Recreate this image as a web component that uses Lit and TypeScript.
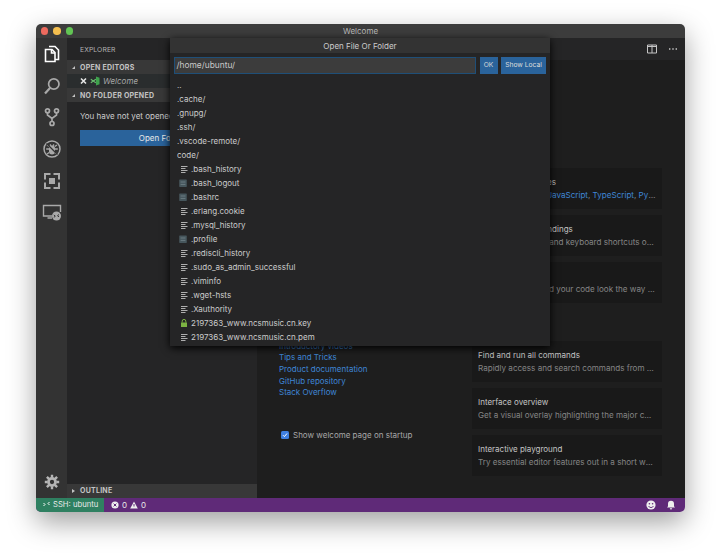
import { LitElement, html, css, svg } from "lit";
import { customElement } from "lit/decorators.js";

const FILES = [
  { name: ".bash_history", icon: "lines" },
  { name: ".bash_logout", icon: "block" },
  { name: ".bashrc", icon: "block" },
  { name: ".erlang.cookie", icon: "lines" },
  { name: ".mysql_history", icon: "lines" },
  { name: ".profile", icon: "block" },
  { name: ".rediscli_history", icon: "lines" },
  { name: ".sudo_as_admin_successful", icon: "lines" },
  { name: ".viminfo", icon: "lines" },
  { name: ".wget-hsts", icon: "lines" },
  { name: ".Xauthority", icon: "lines" },
  { name: "2197363_www.ncsmusic.cn.key", icon: "lock" },
  { name: "2197363_www.ncsmusic.cn.pem", icon: "lines" },
];
const DIRS = ["..", ".cache/", ".gnupg/", ".ssh/", ".vscode-remote/", "code/"];

// icons for the file rows
function fileIcon(kind: string) {
  if (kind === "lock") {
    return svg`<svg class="ficon" viewBox="0 0 10 10"><path d="M4.200 4.500V3.200a1.800 1.800 0 0 1 3.600 0v1.300" fill="none" stroke="#7cb342" stroke-width="1"/><rect x="3" y="4.500" width="6" height="4.500" fill="#7cb342"/></svg>`;
  }
  if (kind === "block") {
    return svg`<svg class="ficon" viewBox="0 0 10 10"><rect x="1.200" y="1.500" width="7.600" height="7.400" rx=".6" fill="#46565c"/><path d="M2.600 4h4.800M2.600 6.400h4.800" stroke="#6b7b81" stroke-width="1"/></svg>`;
  }
  return svg`<svg class="ficon" viewBox="0 0 10 10"><path d="M3 2.500h6.500M3 4.500h4.500M3 6.500h6.500M3 8.500h4.500" stroke="#aeaeae" stroke-width="1" fill="none"/></svg>`;
}

@customElement("activity-bar")
export class ActivityBar extends LitElement {
  static styles = css`
    :host {
      display: flex;
      flex-direction: column;
      align-items: center;
      width: 31px;
      flex: none;
      background: #333333;
      padding-top: 6px;
      box-sizing: border-box;
    }
    svg {
      width: 20px;
      height: 20px;
      margin-bottom: 11.700px;
      flex: none;
      fill: none;
      stroke: #a9a9a9;
    }
    svg.active {
      stroke: #ffffff;
    }
    svg.gear {
      margin-top: auto;
      margin-bottom: 8px;
      width: 16px;
      height: 16px;
    }
  `;

  render() {
    return html`
      <svg class="active" viewBox="0 0 20 20" stroke-width="1.600">
        <path d="M7 2.500h6l3.500 3.500v9.500H13" />
        <path d="M3.500 5.500h6.500l3 3v9h-9.500z" />
        <path d="M9.500 5.500v3.500h3.500" />
      </svg>
      <svg viewBox="0 0 20 20" stroke-width="1.700">
        <circle cx="11.800" cy="8" r="5.200" />
        <path d="M8 12L3 17.500" stroke-width="2.200" />
      </svg>
      <svg viewBox="0 0 20 20" stroke-width="1.700">
        <circle cx="5.500" cy="3.800" r="2" />
        <circle cx="14.500" cy="3.800" r="2" />
        <circle cx="10" cy="16.500" r="2" />
        <path d="M5.500 5.800v2.200l4.500 3.500 4.500-3.500v-2.200M10 11.500v3" />
      </svg>
      <svg viewBox="0 0 20 20" stroke-width="1.500">
        <circle cx="10" cy="10" r="8" />
        <path d="M7 9.500a3 3 0 0 1 6 0v3a3 3 0 0 1-6 0z" fill="#a9a9a9" stroke="none" />
        <path d="M8 5.500l1.200 1.500M12 5.500l-1.200 1.500M4.200 10H7M13 10h2.800M5 15l2.200-1.500M15 15l-2.200-1.500M5 6l2.200 1.500M15 6l-2.200 1.500" stroke-width="1.300" />
        <path d="M4.500 4.500l11 11" stroke-width="1.300" stroke="#333333" />
      </svg>
      <svg viewBox="0 0 20 20" stroke-width="2">
        <path d="M8.500 3H3v5.500M11.500 3H17v5.500M8.500 17H3v-5.500M11.500 17H17v-5.500" />
        <rect x="6.500" y="6.500" width="7" height="7" fill="#a9a9a9" stroke="#333333" stroke-width="1" />
      </svg>
      <svg viewBox="0 0 20 20" stroke-width="1.400" style="overflow:visible">
        <path d="M10 14H1.500V3.500h17V10M5.500 16H10" />
        <circle cx="14.500" cy="14" r="4.500" fill="#a9a9a9" stroke="none" />
        <path d="M11.800 13l1.500 1.200-1.500 1.200M17 12.500l-1.500 1.200 1.500 1.200" stroke="#333" stroke-width="1" />
      </svg>
      <svg class="gear" viewBox="0 0 20 20" stroke-width="3.400" style="stroke:#b5b5b5">
        <circle cx="10" cy="10" r="4.400" />
        <path d="M10 1v3.500M10 15.500V19M1 10h3.500M15.500 10H19M3.600 3.600l2.500 2.500M13.900 13.900l2.500 2.500M3.600 16.400l2.500-2.500M13.900 6.100l2.500-2.500" stroke-width="3" />
      </svg>
    `;
  }
}

@customElement("side-bar")
export class SideBar extends LitElement {
  static styles = css`
    :host {
      display: flex;
      flex-direction: column;
      width: 190px;
      flex: none;
      background: #252526;
      color: #cccccc;
    }
    .title {
      height: 22px;
      line-height: 23px;
      padding-left: 13px;
      font-size: 6.800px;
      letter-spacing: 0.100px;
      color: #b4b4b4;
      box-sizing: border-box;
    }
    .section {
      display: flex;
      align-items: center;
      gap: 5px;
      height: 14px;
      padding-left: 5px;
      background: #383838;
      font-size: 7px;
      font-weight: 700;
      letter-spacing: 0.250px;
      color: #c4c4c4;
    }
    .tri {
      width: 0;
      height: 0;
      border-left: 3px solid transparent;
      border-bottom: 3px solid #c4c4c4;
    }
    .tri.right {
      border-left: 3px solid #c4c4c4;
      border-top: 2.500px solid transparent;
      border-bottom: 2.500px solid transparent;
    }
    .row {
      display: flex;
      align-items: center;
      height: 14px;
      padding-left: 11.500px;
      background: #2a2d2e;
      font-size: 8px;
      font-style: italic;
      color: #a8a8a8;
    }
    .row svg {
      width: 9px;
      height: 10px;
      flex: none;
    }
    .row svg.logo {
      width: 10px;
      margin: 0 3.500px 0 2px;
    }
    .empty {
      padding: 8px 13px 0;
      flex: 1;
      font-size: 8px;
      white-space: nowrap;
      overflow: hidden;
    }
    .empty p {
      margin: 0 0 8px;
      line-height: 12px;
    }
    .open {
      height: 16px;
      line-height: 16px;
      text-align: center;
      background: #2a639b;
      color: #e8e8e8;
    }
  `;

  render() {
    return html`
      <div class="title">EXPLORER</div>
      <div class="section"><span class="tri"></span>OPEN EDITORS</div>
      <div class="row">
        <svg viewBox="0 0 9 10"><path d="M2 2.500l5 5M7 2.500l-5 5" stroke="#e6e6e6" stroke-width="1.600" /></svg>
        <svg class="logo" viewBox="0 0 10 10">
          <path d="M6 .5L9.500 1.800v6.400L6 9.500z" fill="#3fa34d" />
          <path d="M.8 3.300l5 3.400M.8 6.700l5-3.400" stroke="#6cc070" stroke-width="1.100" />
        </svg>
        <span>Welcome</span>
      </div>
      <div class="section"><span class="tri"></span>NO FOLDER OPENED</div>
      <div class="empty">
        <p>You have not yet opened a folder.</p>
        <div class="open">Open Folder</div>
      </div>
      <div class="section"><span class="tri right"></span>OUTLINE</div>
    `;
  }
}

@customElement("welcome-page")
export class WelcomePage extends LitElement {
  static styles = css`
    :host {
      display: flex;
      flex-direction: column;
      flex: 1;
      min-width: 0;
      background: #1e1e1e;
      color: #cccccc;
    }
    .tabs {
      display: flex;
      align-items: center;
      justify-content: flex-end;
      gap: 11px;
      height: 22px;
      padding-right: 7px;
      background: #252526;
      flex: none;
    }
    .tabs svg {
      width: 10px;
      height: 10px;
    }
    .page {
      display: grid;
      grid-template-columns: 193px 190px;
      padding: 0 22px;
      flex: 1;
    }
    .left {
      padding-top: 280.500px;
      font-size: 8px;
    }
    .link {
      display: block;
      height: 11.700px;
      line-height: 11.700px;
      color: #3f86d6;
    }
    .startup {
      display: flex;
      align-items: center;
      gap: 4px;
      margin: 31.500px 0 0 2px;
      color: #a8a8a8;
    }
    .check {
      width: 8px;
      height: 8px;
      border-radius: 1.500px;
      background: #3f7fe0;
      flex: none;
    }
    .check svg {
      display: block;
      width: 8px;
      height: 8px;
    }
    .right {
      padding-top: 108px;
    }
    .card {
      height: 41px;
      margin-bottom: 6px;
      padding: 7.500px 6px 0;
      background: #191919;
      box-sizing: border-box;
      font-size: 8px;
      line-height: 13px;
    }
    .card .name {
      color: #c4c4c4;
    }
    .card .desc {
      font-size: 8.080px;
      color: #858585;
      white-space: nowrap;
      overflow: hidden;
      text-overflow: ellipsis;
    }
    .card .desc a {
      color: #3f86d6;
    }
    .gap {
      height: 32px;
    }
  `;

  render() {
    return html`
      <div class="tabs">
        <svg viewBox="0 0 10 10"><path d="M.500 1h9v8h-9zM5 1v8M.500 2.500h9" fill="none" stroke="#c5c5c5" stroke-width="1" /></svg>
        <svg viewBox="0 0 10 10"><path d="M1 5h1.400M4.300 5h1.400M7.600 5H9" stroke="#c5c5c5" stroke-width="1.300" /></svg>
      </div>
      <div class="page">
        <div class="left">
          <a class="link">Introductory videos</a>
          <a class="link">Tips and Tricks</a>
          <a class="link">Product documentation</a>
          <a class="link">GitHub repository</a>
          <a class="link">Stack Overflow</a>
          <label class="startup">
            <span class="check"><svg viewBox="0 0 8 8"><path d="M2 4.200l1.400 1.400L6 2.500" fill="none" stroke="#fff" stroke-width="1" /></svg></span>
            Show welcome page on startup
          </label>
        </div>
        <div class="right">
          <div class="card">
            <div class="name">Tools and languages</div>
            <div class="desc">Install support for <a>JavaScript</a>, <a>TypeScript</a>, <a>Python</a>, <a>PHP</a>, <a>Azure</a></div>
          </div>
          <div class="card">
            <div class="name">Settings and keybindings</div>
            <div class="desc">Install the settings and keyboard shortcuts of Vim, Sublime, Atom</div>
          </div>
          <div class="card">
            <div class="name">Color theme</div>
            <div class="desc">Make the editor and your code look the way you love</div>
          </div>
          <div class="gap"></div>
          <div class="card">
            <div class="name">Find and run all commands</div>
            <div class="desc">Rapidly access and search commands from the Command Palette</div>
          </div>
          <div class="card">
            <div class="name">Interface overview</div>
            <div class="desc">Get a visual overlay highlighting the major components of the UI</div>
          </div>
          <div class="card">
            <div class="name">Interactive playground</div>
            <div class="desc">Try essential editor features out in a short walkthrough</div>
          </div>
        </div>
      </div>
    `;
  }
}

@customElement("quick-open")
export class QuickOpen extends LitElement {
  static styles = css`
    :host {
      position: absolute;
      left: 134px;
      top: 14px;
      width: 380px;
      height: 308px;
      display: flex;
      flex-direction: column;
      background: #252526;
      color: #cccccc;
      font-size: 8px;
      box-shadow: 0 2px 8px #000000;
    }
    .head {
      height: 15px;
      line-height: 16px;
      text-align: center;
      background: #333333;
      flex: none;
    }
    .bar {
      display: flex;
      gap: 3.500px;
      padding: 4px 4px 0;
      height: 17px;
      flex: none;
    }
    .input {
      flex: 1;
      background: #3c3c3c;
      border: 1px solid #1f4f78;
      font-size: 8.400px;
      line-height: 15px;
      padding-left: 1.500px;
      color: #c8c8c8;
      box-sizing: border-box;
    }
    .btn {
      width: 18px;
      flex: none;
      background: #2a639b;
      color: #dcdcdc;
      line-height: 17px;
      font-size: 6.700px;
      text-align: center;
    }
    .btn.wide {
      width: 45px;
    }
    .list {
      margin-top: 4px;
    }
    .item {
      display: flex;
      align-items: center;
      height: 14px;
      padding-left: 7px;
    }
    .item.file {
      padding-left: 8px;
      gap: 3px;
    }
    .ficon {
      width: 10px;
      height: 10px;
      flex: none;
    }
  `;

  render() {
    return html`
      <div class="head">Open File Or Folder</div>
      <div class="bar">
        <div class="input">/home/ubuntu/</div>
        <div class="btn">OK</div>
        <div class="btn wide">Show Local</div>
      </div>
      <div class="list">
        ${DIRS.map((d) => html`<div class="item">${d}</div>`)}
        ${FILES.map((f) => html`<div class="item file">${fileIcon(f.icon)}<span>${f.name}</span></div>`)}
      </div>
    `;
  }
}

@customElement("app-root")
export class AppRoot extends LitElement {
  static styles = css`
    :host {
      display: block;
      width: 720px;
      height: 558px;
      padding: 24px 35px 46px 36px;
      box-sizing: border-box;
      background: #ffffff;
      font-family: Inter, "Liberation Sans", sans-serif;
      overflow: hidden;
    }
    .window {
      position: relative;
      display: flex;
      flex-direction: column;
      height: 100%;
      border-radius: 5px;
      box-shadow: 0 10px 28px rgba(0, 0, 0, 0.38);
      overflow: hidden;
    }
    .titlebar {
      position: relative;
      flex: none;
      height: 14px;
      line-height: 14px;
      background: #3c3c3c;
      color: #b8b8b8;
      font-size: 8px;
      text-align: center;
    }
    .lights {
      position: absolute;
      left: 4.500px;
      top: 3.250px;
      display: flex;
      gap: 5.200px;
    }
    .lights span {
      width: 7.500px;
      height: 7.500px;
      border-radius: 50%;
    }
    .main {
      display: flex;
      flex: 1;
      min-height: 0;
    }
    .status {
      display: flex;
      align-items: center;
      flex: none;
      height: 14.500px;
      background: #5f2a78;
      color: #e8e8e8;
      font-size: 8px;
    }
    .remote {
      display: flex;
      align-items: center;
      gap: 3px;
      height: 100%;
      width: 68px;
      padding-left: 7px;
      box-sizing: border-box;
      background: #2f8061;
      font-size: 7.700px;
      white-space: nowrap;
    }
    .problems {
      display: flex;
      align-items: center;
      gap: 3px;
      margin-left: 7px;
    }
    .problems svg {
      width: 8px;
      height: 8px;
    }
    .tray {
      display: flex;
      align-items: center;
      gap: 10px;
      margin-left: auto;
      padding-right: 9px;
    }
    .tray svg {
      width: 10px;
      height: 10px;
    }
  `;

  render() {
    return html`
      <div class="window">
        <div class="titlebar">
          <div class="lights">
            <span style="background:#ed6a5e"></span>
            <span style="background:#f5bf4f"></span>
            <span style="background:#62c554"></span>
          </div>
          Welcome
        </div>
        <div class="main">
          <activity-bar></activity-bar>
          <side-bar></side-bar>
          <welcome-page></welcome-page>
        </div>
        <div class="status">
          <div class="remote">
            <svg width="7" height="7" viewBox="0 0 7 7"><path d="M.500 2l1.500 1.500L.500 5M6.500 1L5 2.500 6.500 4" fill="none" stroke="#fff" stroke-width="1" /></svg>
            <span>SSH: ubuntu</span>
          </div>
          <div class="problems">
            <svg viewBox="0 0 8 8"><circle cx="4" cy="4" r="3.600" fill="#eee" /><path d="M2.600 2.600l2.800 2.800M5.400 2.600L2.600 5.400" stroke="#5f2a78" stroke-width="1" /></svg>
            <span>0</span>
            <svg viewBox="0 0 8 8"><path d="M4 .5L7.800 7.500H.2z" fill="#eee" /><path d="M4 3v2.500" stroke="#5f2a78" stroke-width="1" /></svg>
            <span>0</span>
          </div>
          <div class="tray">
            <svg viewBox="0 0 10 10"><circle cx="5" cy="5" r="4.600" fill="#eee" /><circle cx="3.400" cy="3.800" r=".8" fill="#5f2a78" /><circle cx="6.600" cy="3.800" r=".8" fill="#5f2a78" /><path d="M2.600 6a2.600 2.600 0 0 0 4.800 0" fill="none" stroke="#5f2a78" stroke-width=".9" /></svg>
            <svg viewBox="0 0 10 10"><path d="M5 .8a3 3 0 0 1 3 3v2.500l1 1.200H1l1-1.200V3.800a3 3 0 0 1 3-3zM3.800 8.300h2.400a1.200 1.200 0 0 1-2.400 0z" fill="#eee" /></svg>
          </div>
        </div>
        <quick-open></quick-open>
      </div>
    `;
  }
}
